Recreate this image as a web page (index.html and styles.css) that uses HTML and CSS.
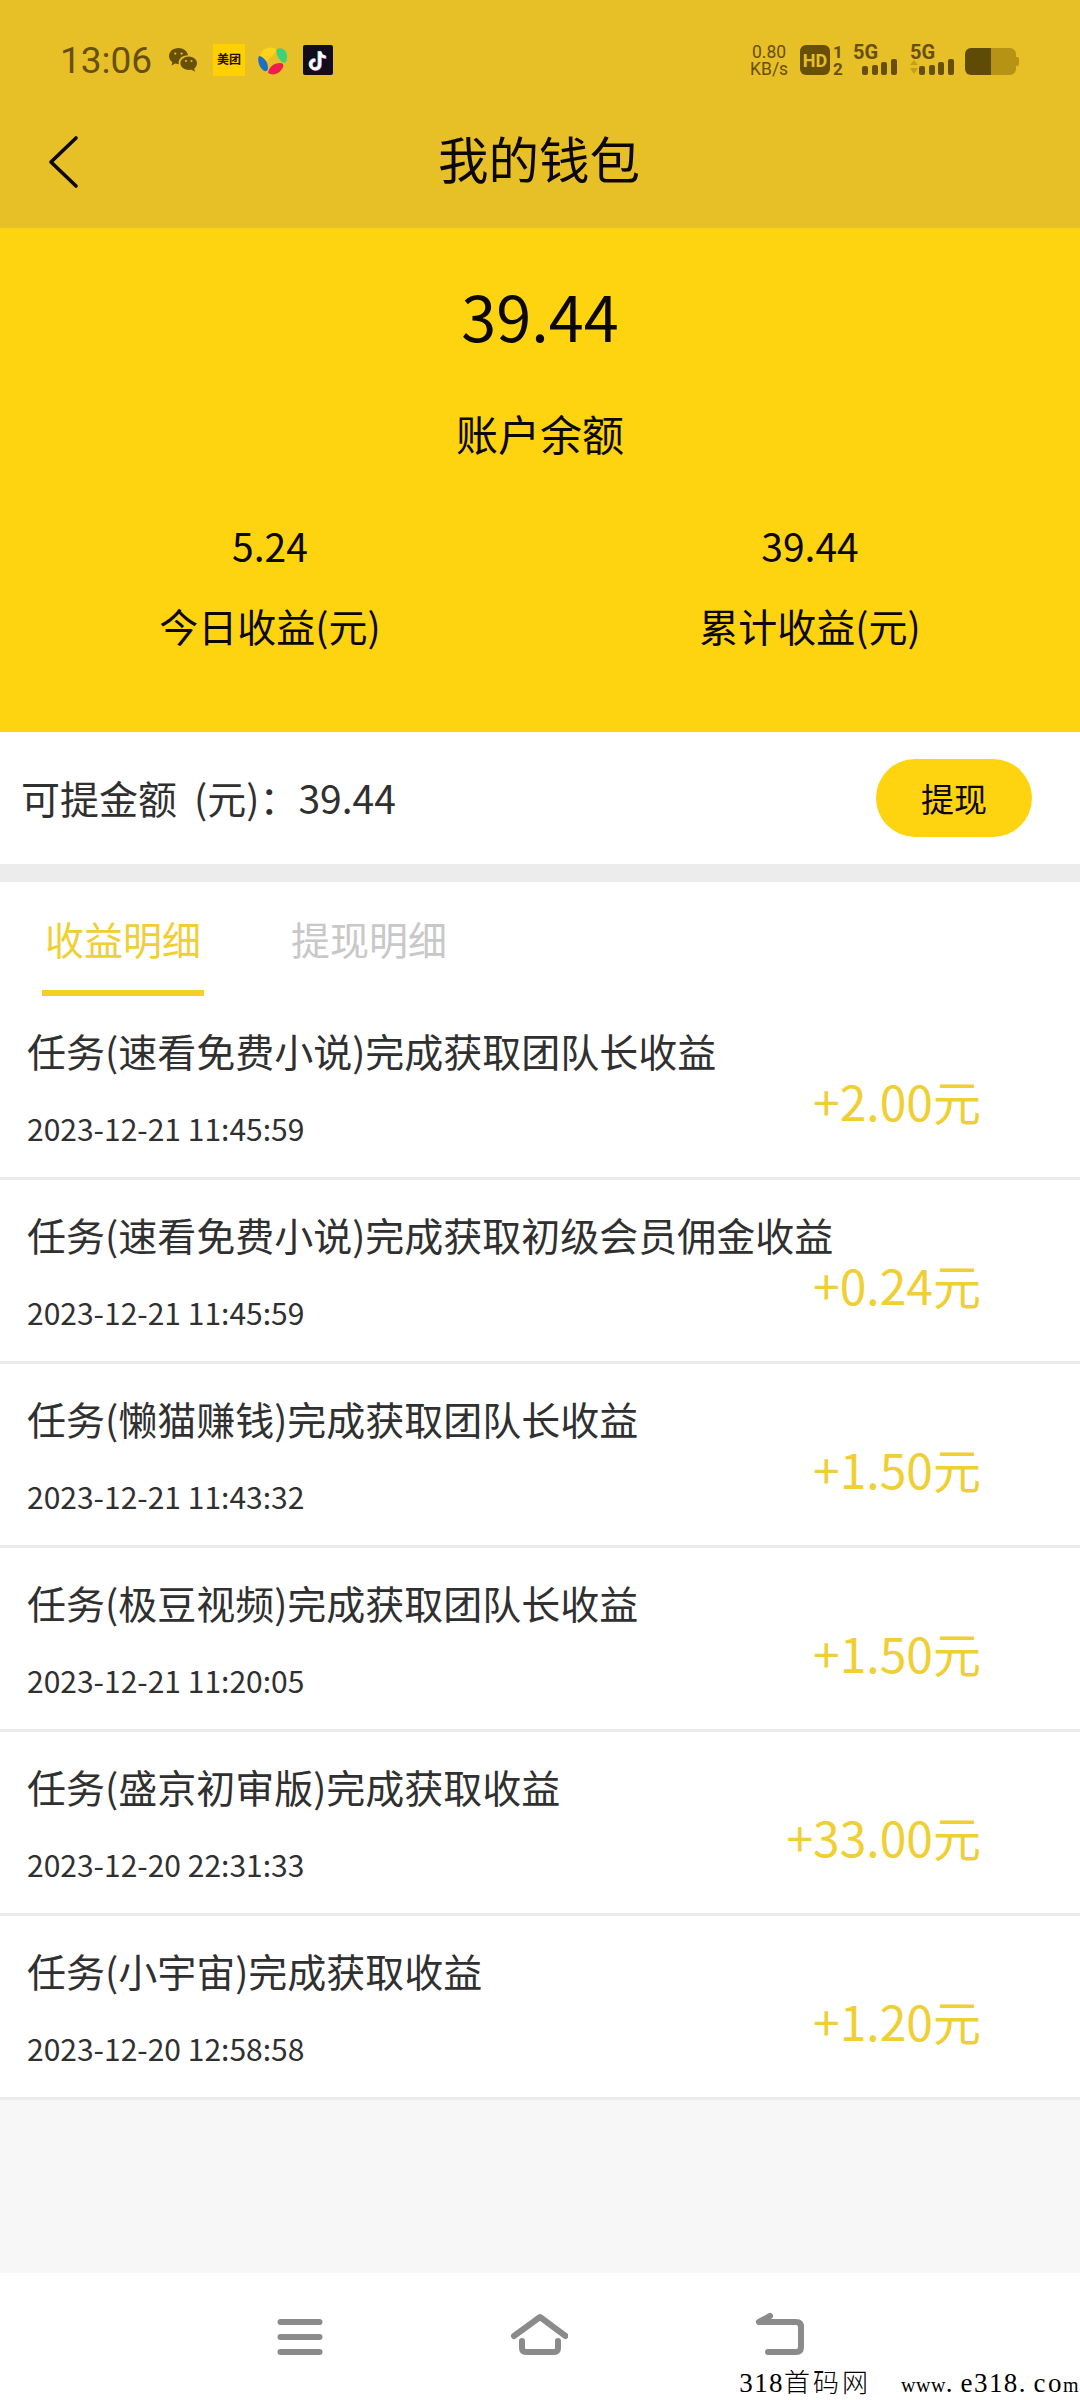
FILE: index.html
```html
<!DOCTYPE html>
<html lang="zh-CN">
<head>
  <meta charset="UTF-8">
  <meta name="viewport" content="width=device-width, initial-scale=1.0">
  <title>我的钱包</title>
  <link rel="stylesheet" href="styles.css">
</head>
<body>
  <div class="page">
    <header class="header">
      <div class="status">
        <span class="time">13:06</span>
        <svg class="wechat" width="28" height="24" viewBox="0 0 28 24">
          <path fill="#675006" d="M9.500 0C4.200 0 0 3.600 0 8c0 2.600 1.300 4.700 3.400 6.200L2.500 17.500l3.700-1.900 3.600.6C8.800 11 13 7.300 19 7.200 18.300 3 14.300 0 9.500 0z"/>
          <path fill="#675006" d="M28 15.300c0-3.700-3.700-6.700-8.200-6.700s-8.400 3-8.400 6.700 3.900 6.700 8.400 6.700l2.700-.3 3.500 2-.8-3c1.700-1.300 2.800-3.200 2.800-5.400z"/>
          <g fill="#e7bf27"><circle cx="6.300" cy="5.600" r="1.100"/><circle cx="12.600" cy="5.600" r="1.100"/><circle cx="17" cy="13" r="1"/><circle cx="22.500" cy="13" r="1"/></g>
        </svg>
        <span class="meituan">美团</span>
        <svg class="petals" width="30" height="28" viewBox="0 0 30 28">
          <path fill="#ffd21c" d="M2 8C4 2 10-1 16 1c3 1 2 4 1 5L9 14z"/>
          <path fill="#3fd07c" d="M19 2c6-3 11 3 10 9 0 4-3 6-5 4-3-3-7-8-5-13z"/>
          <path fill="#1d6fc4" d="M1 9c5 1 9 6 9 12 0 4-4 4-6 1C1 19-1 13 1 9z"/>
          <path fill="#ee1d4c" d="M10 26c1-6 6-10 12-10 4 0 4 3 2 6-3 5-9 7-14 4z"/>
        </svg>
        <svg class="tiktok" width="30" height="30" viewBox="0 0 30 30">
          <rect width="30" height="30" rx="2" fill="#120c1c"/>
          <g fill="none" stroke-width="3">
            <path stroke="#5fe0e6" d="M16 6v13a4.500 4.500 0 1 1-4.500-4.500M16 6c.5 3.500 3 5.500 6 5.500"/>
            <path stroke="#e8487b" d="M17.500 7v13a4.500 4.500 0 1 1-4.500-4.500M17.500 7c.5 3.500 3 5.500 6 5.500"/>
            <path stroke="#fff" d="M16.800 6.500v13a4.500 4.500 0 1 1-4.500-4.500M16.800 6.500c.5 3.500 3 5.500 6 5.500"/>
          </g>
        </svg>
        <div class="speed"><span>0.80</span><span>KB/s</span></div>
        <span class="hd">HD</span>
        <div class="sim"><span>1</span><span>2</span></div>
        <div class="signal">
          <span>5G</span>
          <svg width="36" height="16" viewBox="0 0 36 16"><g fill="#675006"><rect x="0" y="7" width="6" height="9" rx="2"/><rect x="10" y="6" width="6" height="10" rx="2"/><rect x="19" y="3" width="6" height="13" rx="2"/><rect x="29" y="0" width="6" height="16" rx="2"/></g></svg>
        </div>
        <div class="signal">
          <span>5G</span>
          <svg width="45" height="16" viewBox="0 0 45 16"><g fill="#c39e18"><path d="M0 6l4-5 4 5z"/><path d="M0 9l4 6 4-6z"/></g><g fill="#675006"><rect x="9" y="7" width="6" height="9" rx="2"/><rect x="19" y="6" width="6" height="10" rx="2"/><rect x="28" y="3" width="6" height="13" rx="2"/><rect x="38" y="0" width="6" height="16" rx="2"/></g></svg>
        </div>
        <svg class="battery" width="54" height="28" viewBox="0 0 54 28">
          <path fill="#b69215" d="M26 0h19a6 6 0 0 1 6 6v3h1q2 0 2 2v5q0 2-2 2h-1v3a6 6 0 0 1-6 6H26z"/>
          <path fill="#604b06" d="M6 0h20v27H6a6 6 0 0 1-6-6V6a6 6 0 0 1 6-6z"/>
        </svg>
      </div>
      <div class="title-bar">
        <svg class="back" width="32" height="54" viewBox="0 0 32 54"><path d="M28 3L3 27l25 24" fill="none" stroke="#0c0800" stroke-width="3.600" stroke-linecap="round" stroke-linejoin="round"/></svg>
        <h1>我的钱包</h1>
      </div>
    </header>

    <section class="balance">
      <div class="balance-num">39.44</div>
      <div class="balance-label">账户余额</div>
      <div class="stats">
        <div class="stat"><b>5.24</b><span>今日收益(元)</span></div>
        <div class="stat"><b>39.44</b><span>累计收益(元)</span></div>
      </div>
    </section>

    <section class="withdraw">
      <p>可提金额<span class="unit">(元)：39.44</span></p>
      <button class="btn">提现</button>
    </section>

    <nav class="tabs">
      <span class="tab active">收益明细</span>
      <span class="tab">提现明细</span>
    </nav>

    <ul class="list">
      <li class="item">
        <div class="info"><p>任务(速看免费小说)完成获取团队长收益</p><time>2023-12-21 11:45:59</time></div>
        <span class="money">+2.00元</span>
      </li>
      <li class="item">
        <div class="info"><p>任务(速看免费小说)完成获取初级会员佣金收益</p><time>2023-12-21 11:45:59</time></div>
        <span class="money">+0.24元</span>
      </li>
      <li class="item">
        <div class="info"><p>任务(懒猫赚钱)完成获取团队长收益</p><time>2023-12-21 11:43:32</time></div>
        <span class="money">+1.50元</span>
      </li>
      <li class="item">
        <div class="info"><p>任务(极豆视频)完成获取团队长收益</p><time>2023-12-21 11:20:05</time></div>
        <span class="money">+1.50元</span>
      </li>
      <li class="item">
        <div class="info"><p>任务(盛京初审版)完成获取收益</p><time>2023-12-20 22:31:33</time></div>
        <span class="money">+33.00元</span>
      </li>
      <li class="item">
        <div class="info"><p>任务(小宇宙)完成获取收益</p><time>2023-12-20 12:58:58</time></div>
        <span class="money">+1.20元</span>
      </li>
    </ul>

    <footer class="sys-nav">
      <div class="keys">
        <svg width="46" height="46" viewBox="0 0 46 46"><path d="M3.500 10h39M3.500 25h39M3.500 40h39"/></svg>
        <svg width="58" height="46" viewBox="0 0 58 46"><path d="M4 24L30 5l25.500 19M12 29v7q0 4 4 4h28q4 0 4-4v-7"/></svg>
        <svg width="50" height="46" viewBox="0 0 50 46"><path d="M15 4L4 10h37q5 0 5 5v20q0 5-5 5H13"/></svg>
      </div>
      <div class="mark"><span>318<b>首码网</b></span><span><i>www</i><u>.</u>e318<u>.</u><s>c</s>o<i>m</i></span></div>
    </footer>
  </div>
</body>
</html>
```
FILE: styles.css
```css
* { box-sizing: border-box; margin: 0; padding: 0; }
body {
  font-family: "Noto Sans CJK SC", sans-serif;
  background-color: #f7f7f7;
  color: #303030;
}
.page {
  display: flex;
  flex-direction: column;
  width: 1080px;
  height: 2400px;
  overflow: hidden;
}
svg { display: block; flex: none; }

/* header */
.header {
  height: 228px;
  background-color: #e7bf27;
}
.status {
  display: flex;
  align-items: flex-start;
  height: 120px;
  padding: 44px 59px 0 60px;
  color: #675006;
  font-family: Roboto, sans-serif;
}
.time {
  flex: none;
  width: 109px;
  font-size: 37px;
  line-height: 34px;
}
.wechat { margin-top: 4px; }
.meituan {
  flex: none;
  width: 32px;
  height: 32px;
  margin-left: 16px;
  background-color: #ffd100;
  color: #1c1500;
  font: bold 12px/30px "Noto Sans CJK SC", sans-serif;
  text-align: center;
  white-space: nowrap;
}
.petals { margin: 3px 0 0 13px; }
.tiktok { margin: 1px 0 0 15px; }
.speed {
  display: flex;
  flex: none;
  flex-direction: column;
  width: 38px;
  margin-left: 417px;
  font-size: 17.5px;
  line-height: 17px;
  text-align: center;
}
.hd {
  flex: none;
  width: 30px;
  height: 30px;
  margin: 1px 0 0 12px;
  border-radius: 6px;
  background-color: #675006;
  color: #e7bf27;
  font-size: 18px;
  font-weight: bold;
  line-height: 31px;
  text-align: center;
}
.sim {
  display: flex;
  flex: none;
  flex-direction: column;
  width: 12px;
  margin-left: 2px;
  font-size: 17px;
  font-weight: bold;
  line-height: 17px;
  text-align: center;
}
.signal {
  display: flex;
  flex: none;
  flex-direction: column;
  align-items: flex-end;
  width: 45px;
  margin-left: 9px;
  font-size: 20px;
  font-weight: bold;
  line-height: 15px;
}
.signal + .signal { margin-left: 12px; }
.signal span { align-self: flex-start; padding-top: 1px; }
.signal svg { margin-top: -1px; }
.battery { margin: 4px 0 0 10px; }
.title-bar {
  display: flex;
  align-items: center;
  height: 84px;
  padding: 0 48px;
}
.title-bar h1 {
  flex: 1;
  padding: 0 34px 9px 0;
  color: #0c0800;
  font-size: 50.5px;
  font-weight: normal;
  line-height: 75px;
  text-align: center;
}

/* balance */
.balance {
  height: 504px;
  padding-top: 47px;
  background-color: #fed30f;
  color: #0c0800;
  text-align: center;
}
.balance-num {
  font-size: 63px;
  line-height: 80px;
}
.balance-label {
  margin-top: 53px;
  font-size: 42px;
  line-height: 50px;
}
.stats {
  display: grid;
  grid-template-columns: 1fr 1fr;
  margin-top: 62px;
}
.stat {
  display: flex;
  flex-direction: column;
  gap: 30px;
  font-size: 39px;
  line-height: 50px;
}
.stat b { font-weight: normal; }

.withdraw {
  display: flex;
  justify-content: space-between;
  align-items: center;
  height: 150px;
  padding: 0 48px 20px 21px;
  background: linear-gradient(#fff 132px, #ececec 132px);
  font-size: 39px;
}
.unit { margin-left: 17px; }
.btn {
  width: 156px;
  height: 78px;
  margin-top: 2px;
  border: none;
  border-radius: 39px;
  background-color: #fed30f;
  color: #0c0800;
  font-family: inherit;
  font-size: 33px;
}

/* tabs */
.tabs {
  display: flex;
  gap: 84px;
  height: 114px;
  padding: 0 42px;
  background-color: #fff;
}
.tab {
  width: 162px;
  color: #c8c8c8;
  font-size: 39px;
  line-height: 113px;
  text-align: center;
}
.tab.active {
  border-bottom: 6px solid #f6cf24;
  color: #efcf33;
}

/* records */
.list { list-style: none; }
.item {
  display: flex;
  justify-content: space-between;
  align-items: flex-start;
  height: 184px;
  padding: 26px 99px 0 27px;
  border-bottom: 3px solid #ebebeb;
  background-color: #fff;
}
.info {
  flex: 1;
  min-width: 0;
  white-space: nowrap;
}
.info p {
  font-size: 39px;
  line-height: 56px;
}
.info time {
  display: block;
  margin-top: 30px;
  font-size: 30px;
  line-height: 40px;
}
.money {
  margin-top: 48px;
  color: #efcf33;
  font-size: 48px;
  line-height: 60px;
}

/* system keys */
.sys-nav {
  height: 127px;
  margin-top: auto;
  padding-top: 39px;
  background-color: #fff;
}
.keys {
  display: flex;
  gap: 187px;
  padding-left: 277px;
}
.keys svg {
  fill: none;
  stroke: #8b8b8b;
  stroke-width: 6;
  stroke-linecap: round;
  stroke-linejoin: round;
}
/* every latin glyph takes a 15px cell */
.mark {
  display: flex;
  justify-content: flex-end;
  align-items: baseline;
  gap: 30px;
  margin-top: 11px;
  padding-right: 1px;
  color: #000;
  font: 27px/28px "Liberation Serif", serif;
  letter-spacing: 1.400px;
  white-space: nowrap;
}
.mark b {
  font: 300 26px/24px "Noto Sans CJK SC", sans-serif;
  letter-spacing: 3px;
}
.mark i {
  font-size: 20px;
  font-style: normal;
  line-height: 20px;
  letter-spacing: 0.500px;
}
.mark u {
  text-decoration: none;
  letter-spacing: 8px;
}
.mark s {
  text-decoration: none;
  letter-spacing: 2.600px;
}
```
